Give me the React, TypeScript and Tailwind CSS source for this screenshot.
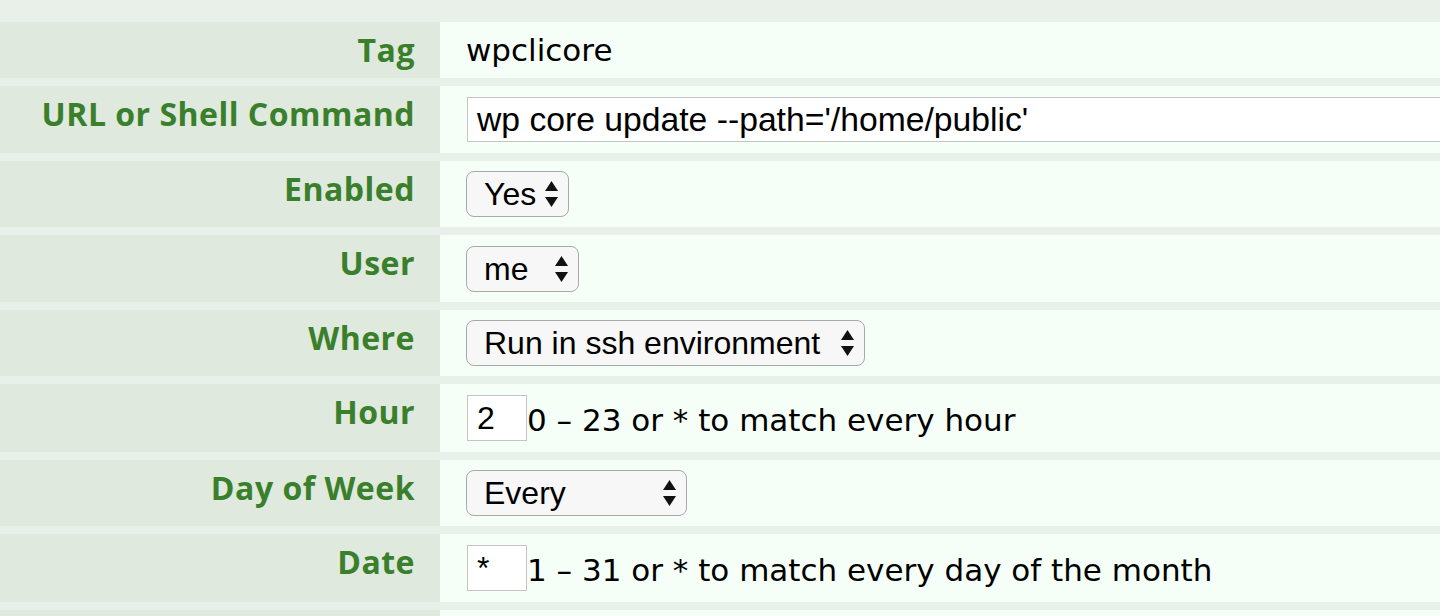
import React from "react";

const labelFont = { fontFamily: '"Open Sans", "DejaVu Sans", sans-serif' };
const valueFont = { fontFamily: '"DejaVu Sans", Verdana, sans-serif' };
const ctrlFont = { fontFamily: '"Liberation Sans", Arial, sans-serif' };

function Arrows() {
  return (
    <svg width="13" height="26" viewBox="0 0 13 26" className="shrink-0">
      <polygon points="6.5,0 13,10 0,10" fill="#111" />
      <polygon points="0,16 13,16 6.5,26" fill="#111" />
    </svg>
  );
}

function Select({ text, w }: { text: string; w: string }) {
  return (
    <div
      className={`flex h-[46px] items-center justify-between rounded-[8px] border border-[#a9a9a9] bg-[#f7f7f7] pl-[17px] pr-[10px] text-[32px] text-black ${w}`}
      style={ctrlFont}
    >
      <span className="leading-none">{text}</span>
      <Arrows />
    </div>
  );
}

function Row({ label, h, children }: { label: string; h: string; children?: React.ReactNode }) {
  return (
    <div className={`flex shrink-0 ${h}`}>
      <div
        className="w-[440px] shrink-0 bg-[#dfe9dd] pr-[25px] pt-[8px] text-right text-[32px] font-bold leading-[40px] tracking-[0.5px] text-[#3a7f2c]"
        style={labelFont}
      >
        {label}
      </div>
      <div className="flex flex-1 items-center overflow-hidden bg-[#f6fff7] pl-[26px]">{children}</div>
    </div>
  );
}

function Help({ children }: { children: React.ReactNode }) {
  return (
    <span className="pt-[4px] text-[31px] leading-none text-black whitespace-nowrap" style={valueFont}>
      {children}
    </span>
  );
}

function SmallInput({ v }: { v: string }) {
  return (
    <div
      className="flex h-[46px] w-[60px] shrink-0 items-center border border-[#c4c4c4] bg-white pl-[9px] text-[32px] text-black"
      style={ctrlFont}
    >
      {v}
    </div>
  );
}

export default function App() {
  return (
    <div className="flex h-[616px] w-[1440px] flex-col gap-[8px] overflow-hidden bg-[#e9efe9] pt-[22px]">
      <Row label="Tag" h="h-[56px]">
        <span className="text-[31px] leading-none text-black" style={valueFont}>
          wpclicore
        </span>
      </Row>
      <Row label="URL or Shell Command" h="h-[67px]">
        <div
          className="ml-px flex h-[45px] w-[1100px] shrink-0 items-center border border-[#c4c4c4] bg-white pl-[9px] text-[33.7px] text-black whitespace-nowrap"
          style={ctrlFont}
        >
          wp core update --path='/home/public'
        </div>
      </Row>
      <Row label="Enabled" h="h-[66px]">
        <Select text="Yes" w="w-[103px]" />
      </Row>
      <Row label="User" h="h-[67px]">
        <Select text="me" w="w-[113px]" />
      </Row>
      <Row label="Where" h="h-[66px]">
        <Select text="Run in ssh environment" w="w-[399px]" />
      </Row>
      <Row label="Hour" h="h-[68px]">
        <div className="ml-px flex items-center">
          <SmallInput v="2" />
          <Help>0 – 23 or * to match every hour</Help>
        </div>
      </Row>
      <Row label="Day of Week" h="h-[66px]">
        <Select text="Every" w="w-[221px]" />
      </Row>
      <Row label="Date" h="h-[68px]">
        <div className="ml-px flex items-center">
          <SmallInput v="*" />
          <Help>1 – 31 or * to match every day of the month</Help>
        </div>
      </Row>
      <Row label="" h="h-[60px]" />
    </div>
  );
}
